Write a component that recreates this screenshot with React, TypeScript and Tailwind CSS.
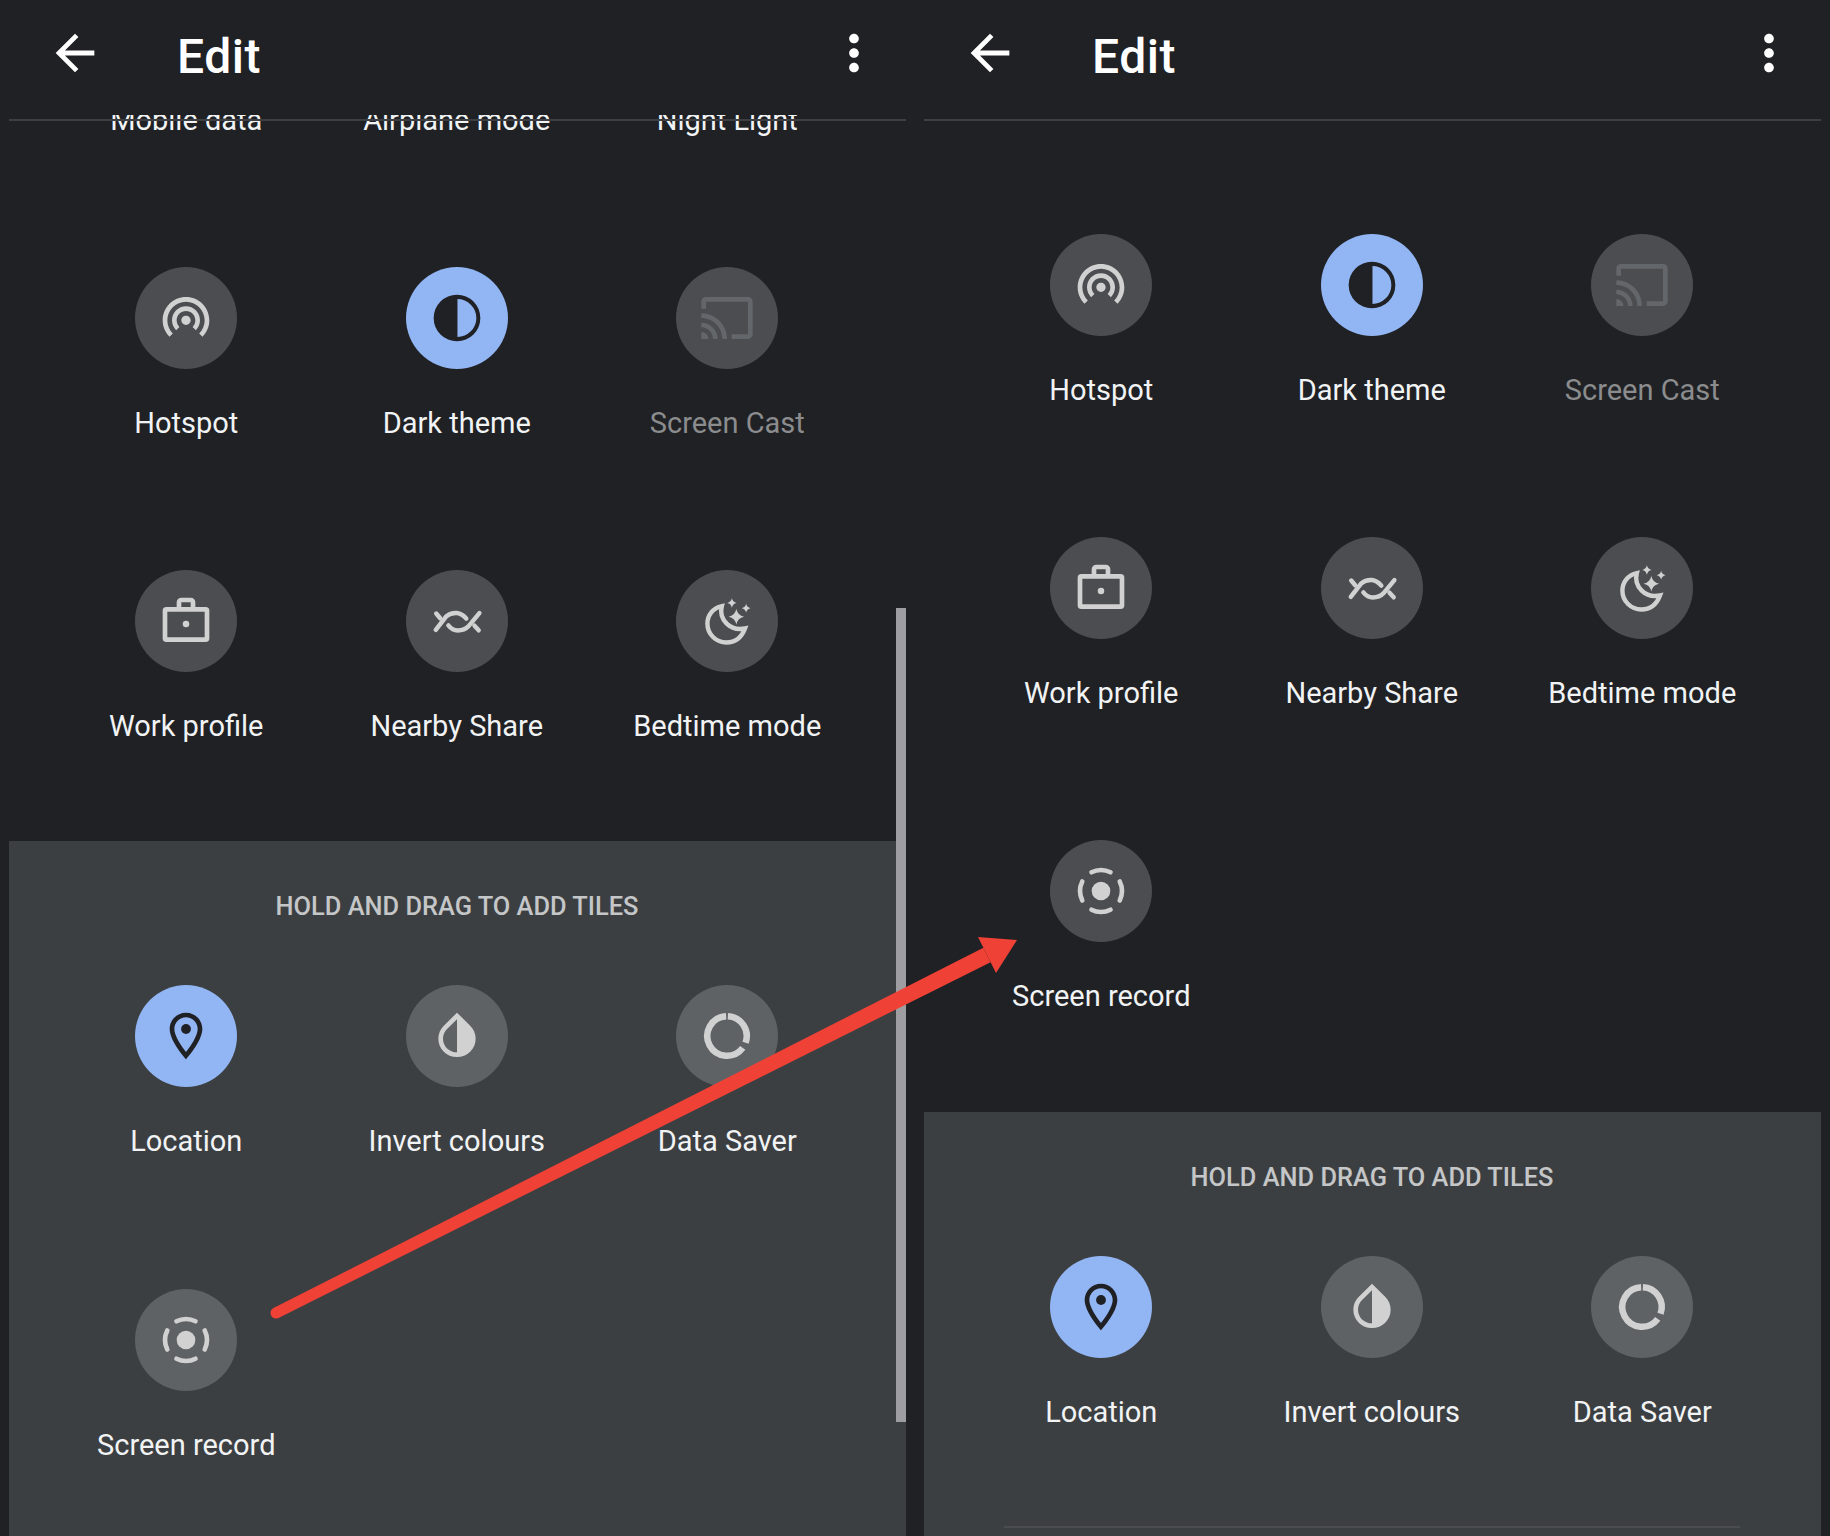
import type { ReactNode } from "react";

const sparkle = (x: number, y: number, r: number) => {
  const c = r * 0.18;
  return `M${x} ${y - r}Q${x + c} ${y - c} ${x + r} ${y}Q${x + c} ${y + c} ${x} ${y + r}Q${x - c} ${y + c} ${x - r} ${y}Q${x - c} ${y - c} ${x} ${y - r}Z`;
};

function Glyph({ children }: { children: ReactNode }) {
  return (
    <svg viewBox="0 0 24 24" className="h-[56px] w-[56px]" fill="currentColor">
      {children}
    </svg>
  );
}

const HotspotIcon = () => (
  <Glyph>
    <path d="M12 11c-1.1 0-2 .9-2 2 0 .55.23 1.05.59 1.41.36.36.86.59 1.41.59s1.05-.23 1.41-.59c.36-.36.59-.86.59-1.41 0-1.1-.9-2-2-2zm6 2c0-3.31-2.69-6-6-6s-6 2.69-6 6c0 1.66.68 3.15 1.76 4.24l1.42-1.42C8.45 15.1 8 14.11 8 13c0-2.21 1.79-4 4-4s4 1.79 4 4c0 1.11-.45 2.1-1.18 2.82l1.42 1.42C17.32 16.15 18 14.66 18 13zM12 3C6.48 3 2 7.48 2 13c0 2.76 1.12 5.26 2.93 7.07l1.42-1.42C4.9 17.21 4 15.21 4 13c0-4.42 3.58-8 8-8s8 3.58 8 8c0 2.21-.9 4.21-2.35 5.65l1.42 1.42C20.88 18.26 22 15.76 22 13c0-5.52-4.48-10-10-10z" />
  </Glyph>
);

const ContrastIcon = () => (
  <Glyph>
    <path fillRule="evenodd" d="M12 2a10 10 0 1 0 0 20a10 10 0 0 0 0-20zM12.2 3.9a8.1 8.1 0 0 1 0 16.2z" />
  </Glyph>
);

const CastIcon = () => (
  <Glyph>
    <path d="M21 3H3c-1.1 0-2 .9-2 2v3h2V5h18v14h-7v2h7c1.1 0 2-.9 2-2V5c0-1.1-.9-2-2-2zM1 18v3h3c0-1.66-1.34-3-3-3zm0-4v2c2.76 0 5 2.24 5 5h2c0-3.87-3.13-7-7-7zm0-4v2c4.97 0 9 4.03 9 9h2c0-6.08-4.93-11-11-11z" />
  </Glyph>
);

const WorkIcon = () => (
  <Glyph>
    <g fill="none" stroke="currentColor" strokeWidth="2" strokeLinejoin="round">
      <rect x="3" y="7" width="18" height="13" rx="0.6" />
      <path d="M9 7V4a1 1 0 0 1 1-1h4a1 1 0 0 1 1 1v3" />
    </g>
    <circle cx="12" cy="13.3" r="1.4" />
  </Glyph>
);

const NearbyIcon = () => (
  <Glyph>
    <g fill="none" stroke="currentColor" strokeWidth="1.9" strokeLinecap="round">
      <path d="M2.9 15.8L7.4 10C8.8 8.8 10.4 8.5 12 8.6C13.8 8.8 14.9 9.7 16 11" />
      <path d="M8.3 13.9C9.5 15.4 10.8 16.1 12.3 16.1C14.2 16.1 15.8 15.5 16.9 14.3L21.6 8.6" />
      <path d="M3.1 8.8L4.8 10.8" />
      <path d="M19.5 14L21.3 16" />
    </g>
  </Glyph>
);

const BedtimeIcon = () => (
  <Glyph>
    <path
      d="M9.8 5.6C6 6.4 3.6 9.5 3.6 13.1C3.6 17.7 7.3 21.2 11.7 21.2C15.2 21.2 18.2 19.2 19.7 15.2C13.5 16.5 8.3 11.5 9.8 5.6Z"
      fill="none"
      stroke="currentColor"
      strokeWidth="1.9"
    />
    <path d={sparkle(16, 10.2, 3.3)} />
    <path d={sparkle(14.1, 4.3, 2)} />
    <path d={sparkle(20.2, 6.5, 1.9)} />
  </Glyph>
);

const RecordIcon = () => (
  <Glyph>
    <circle cx="12" cy="12" r="4" />
    <circle
      cx="12"
      cy="12"
      r="9"
      fill="none"
      stroke="currentColor"
      strokeWidth="2"
      strokeLinecap="round"
      pathLength={360}
      strokeDasharray="54 36"
      strokeDashoffset="27"
    />
  </Glyph>
);

const LocationIcon = () => (
  <Glyph>
    <path d="M12 2C8.13 2 5 5.13 5 9c0 5.25 7 13 7 13s7-7.75 7-13c0-3.87-3.13-7-7-7zM7 9c0-2.76 2.24-5 5-5s5 2.24 5 5c0 2.88-2.88 7.19-5 9.88C9.92 16.21 7 11.85 7 9z" />
    <circle cx="12" cy="9" r="2.1" />
  </Glyph>
);

const InvertIcon = () => (
  <Glyph>
    <path d="M12 4.81V19c-3.31 0-6-2.63-6-5.87 0-1.56.62-3.03 1.75-4.14L12 4.81M6.35 7.56C4.9 9 4 10.96 4 13.13 4 17.48 7.58 21 12 21s8-3.52 8-7.87c0-2.17-.9-4.13-2.35-5.57L12 2 6.35 7.56z" />
  </Glyph>
);

const DataSaverIcon = () => (
  <Glyph>
    <g fill="none" stroke="currentColor" strokeWidth="2.8">
      <path d="M12.37 3.56A8.45 8.45 0 0 1 19.94 14.89" />
      <path d="M18.75 17.09A8.45 8.45 0 1 1 11.63 3.56" />
    </g>
  </Glyph>
);

type TileProps = {
  label: string;
  icon: ReactNode;
  active?: boolean;
  disabled?: boolean;
  lifted?: boolean;
};

function Tile({ label, icon, active, disabled, lifted }: TileProps) {
  const circle = active
    ? "bg-[#92b5f3] text-[#202124]"
    : disabled
      ? "bg-[#4c4d51] text-[#63666a]"
      : lifted
        ? "bg-[#5f6265] text-[#d0d1d0]"
        : "bg-[#4c4d51] text-[#d0d1d0]";
  return (
    <div className="flex flex-col items-center">
      <div className={`flex h-[102px] w-[102px] items-center justify-center rounded-full ${circle}`}>{icon}</div>
      <span className={`mt-[36px] h-[36px] text-[29px] leading-[36px] ${disabled ? "text-[#8b8c8e]" : "text-[#f1f3f4]"}`}>
        {label}
      </span>
    </div>
  );
}

function Header() {
  return (
    <>
      <div className="flex h-[115px] items-start justify-between pl-[37px] pr-[23px] pt-[24px] text-white">
        <div className="flex items-start">
          <svg viewBox="0 0 24 24" className="h-[58px] w-[58px]" fill="currentColor">
            <path d="M20 11H7.83l5.59-5.59L12 4l-8 8 8 8 1.41-1.41L7.83 13H20v-2z" />
          </svg>
          <h1 className="ml-[73px] mt-[4px] text-[48px] font-medium leading-[58px] tracking-[0.5px]">Edit</h1>
        </div>
        <svg viewBox="0 0 24 24" className="h-[58px] w-[58px]" fill="currentColor">
          <path d="M12 8c1.1 0 2-.9 2-2s-.9-2-2-2-2 .9-2 2 .9 2 2 2zm0 2c-1.1 0-2 .9-2 2s.9 2 2 2 2-.9 2-2-.9-2-2-2zm0 6c-1.1 0-2 .9-2 2s.9 2 2 2 2-.9 2-2-.9-2-2-2z" />
        </svg>
      </div>
      <div className="absolute inset-x-0 top-[119px] z-10 h-[2px] bg-[#3e3f43]" />
    </>
  );
}

function AvailableTiles({ children }: { children: ReactNode }) {
  return (
    <section className="flex flex-1 flex-col bg-[#3c3f42] pl-[42px] pt-[49px]">
      <h2 className="h-[32px] w-[812px] text-center text-[25.4px] font-medium uppercase leading-[32px] text-[#c4c6c7]">
        Hold and drag to add tiles
      </h2>
      <div className="mt-[63px] grid grid-cols-[repeat(3,270.5px)] gap-y-[130px]">{children}</div>
    </section>
  );
}

const addable = (
  <>
    <Tile label="Location" icon={<LocationIcon />} active />
    <Tile label="Invert colours" icon={<InvertIcon />} lifted />
    <Tile label="Data Saver" icon={<DataSaverIcon />} lifted />
  </>
);

const current = (
  <>
    <Tile label="Hotspot" icon={<HotspotIcon />} />
    <Tile label="Dark theme" icon={<ContrastIcon />} active />
    <Tile label="Screen Cast" icon={<CastIcon />} disabled />
    <Tile label="Work profile" icon={<WorkIcon />} />
    <Tile label="Nearby Share" icon={<NearbyIcon />} />
    <Tile label="Bedtime mode" icon={<BedtimeIcon />} />
  </>
);

export default function App() {
  return (
    <div
      className="relative flex h-[1536px] w-[1830px] gap-[18px] overflow-hidden bg-[#202124] px-[9px]"
      style={{ fontFamily: "Roboto, sans-serif" }}
    >
      {/* before */}
      <div className="relative flex w-[897px] flex-col">
        <Header />
        <div className="overflow-hidden pb-[97px] pl-[42px]">
          <div className="-mt-[13px] grid grid-cols-[repeat(3,270.5px)] gap-y-[129px]">
            {["Mobile data", "Airplane mode", "Night Light"].map((label) => (
              <span key={label} className="h-[36px] text-center text-[29px] leading-[36px] text-[#f1f3f4]">
                {label}
              </span>
            ))}
            {current}
          </div>
        </div>
        <AvailableTiles>
          {addable}
          <Tile label="Screen record" icon={<RecordIcon />} lifted />
        </AvailableTiles>
        <div className="absolute bottom-[114px] right-0 top-[608px] w-[10px] bg-[#9d9da2]" />
      </div>

      {/* after */}
      <div className="relative flex w-[897px] flex-col">
        <Header />
        <div className="pb-[98px] pl-[42px] pt-[119px]">
          <div className="grid grid-cols-[repeat(3,270.5px)] gap-y-[129px]">
            {current}
            <Tile label="Screen record" icon={<RecordIcon />} />
          </div>
        </div>
        <AvailableTiles>{addable}</AvailableTiles>
        <div className="absolute bottom-[8px] left-[80px] right-[81px] h-[2px] bg-[#4a4c50]" />
      </div>

      {/* red annotation arrow, slightly tapered towards the start */}
      <svg className="pointer-events-none absolute left-0 top-0 z-20 h-[1536px] w-[1830px]" viewBox="0 0 1830 1536">
        <circle cx="276" cy="1313" r="5.5" fill="#ef4136" />
        <polygon points="273.5,1308.1 983.4,947.8 990.6,962.2 278.5,1317.9" fill="#ef4136" />
        <polygon points="978,937 1017,940 996,973" fill="#ef4136" />
      </svg>
    </div>
  );
}
